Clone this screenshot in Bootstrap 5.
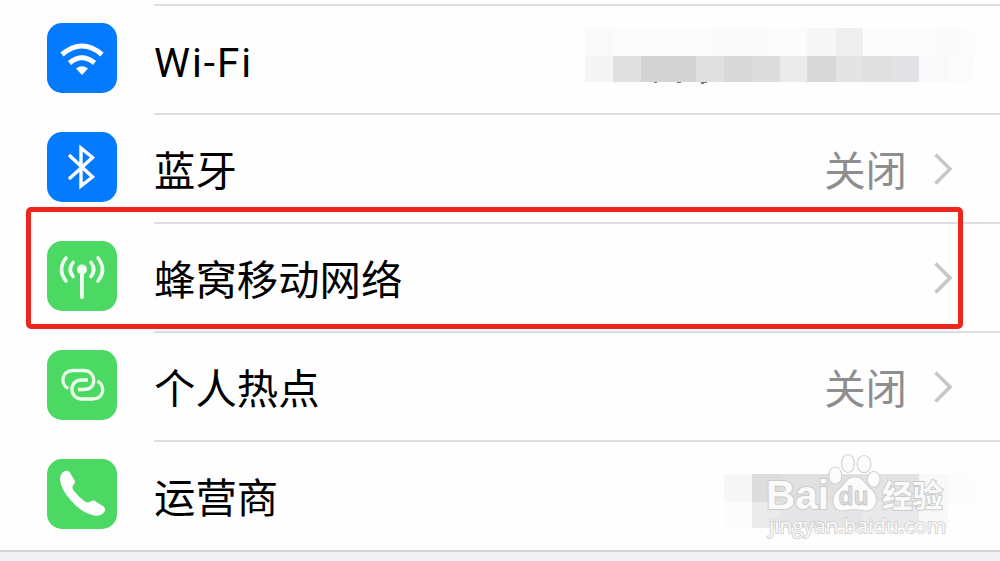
<!DOCTYPE html>
<html lang="zh-CN">
<head>
  <meta charset="UTF-8">
  <title>设置</title>
  <meta name="viewport" content="width=device-width, initial-scale=1">

  <link href="https://cdn.jsdelivr.net/npm/bootstrap@5.3.3/dist/css/bootstrap.min.css" rel="stylesheet">

  <style>
    body {
      background-color: #efeff4;
      font-family: "Noto Sans CJK SC", sans-serif;
      color: #000;
      overflow: hidden;
    }
    .settings {
      padding: 4px 0 0 47px;
      background: #fefefe;
      border-bottom: 2px solid #d2d2d8;
    }
    .setting-row {
      height: 109px;
      gap: 37px;
    }
    .setting-row:last-child {
      height: 110px;
    }
    .setting-row svg {
      flex: none;
    }
    .app-icon {
      width: 70px;
      height: 70px;
      margin-top: 18.5px;
      border-radius: 15px;
    }
    .icon-blue { background: #047afe; }
    .icon-green { background: #4bd964; }
    .setting-body {
      height: 109px;
      border-top: 2px solid #dededf;
      padding-right: 47px;
    }
    .setting-name, .setting-value {
      font-size: 41.4px;
      line-height: 60px;
      margin-top: -2px;
    }
    .setting-value {
      color: #8e8e8e;
      margin-right: 26px;
    }
    .latin {
      font-family: Roboto, sans-serif;
      font-size: 40.5px;
      letter-spacing: 2px;
      margin-top: 6px;
    }
    .highlight {
      left: 26px;
      top: 207px;
      width: 937px;
      height: 122px;
      border: 5.5px solid #ec261d;
      border-radius: 5px;
    }
    .wifi-mosaic { left: 585px; top: 28px; }
    .carrier-mosaic { left: 724px; top: 454px; }
  </style>
</head>

<body>

  <main class="settings">
    <div class="setting-row d-flex">
      <div class="app-icon icon-blue">
        <svg width="70" height="70" viewBox="0 0 70 70" fill="none" stroke="#fff" stroke-width="5">
          <path d="M15 31.500 Q35 14.500 55 31.500M22.500 40 Q35 29.500 47.500 40"/>
          <path d="M29 45.500 Q35 41 41 45.500 L35 52Z" fill="#fff" stroke="none"/>
        </svg>
      </div>
      <div class="setting-body flex-grow-1 d-flex align-items-center">
        <span class="setting-name latin">Wi-Fi</span>
      </div>
    </div>

    <div class="setting-row d-flex">
      <div class="app-icon icon-blue">
        <svg width="70" height="70" viewBox="0 0 70 70" fill="none" stroke="#fff" stroke-width="3.4">
          <path d="M22 23 L45.500 45 L34 54 V16 L45.500 25.500 L22 47"/>
        </svg>
      </div>
      <div class="setting-body flex-grow-1 d-flex align-items-center">
        <span class="setting-name">蓝牙</span>
        <span class="setting-value ms-auto">关闭</span>
        <svg width="20" height="34" viewBox="0 0 20 34" fill="none" stroke="#c7c7cb" stroke-width="3.6"><path d="M2.500 2.500 L17 17 L2.500 31.500"/></svg>
      </div>
    </div>

    <div class="setting-row d-flex">
      <div class="app-icon icon-green">
        <svg width="70" height="70" viewBox="0 0 70 70" fill="none" stroke="#f2fff3" stroke-width="3.6" stroke-linecap="round">
          <path d="M35 30 V56" stroke-width="4"/>
          <circle cx="35" cy="28.500" r="5" fill="#f2fff3" stroke="none"/>
          <path d="M26 21.500 Q20.500 28.500 26 35.500M44 21.500 Q49.500 28.500 44 35.500M19 17 Q10 28.500 19 40M51 17 Q60 28.500 51 40"/>
        </svg>
      </div>
      <div class="setting-body flex-grow-1 d-flex align-items-center">
        <span class="setting-name">蜂窝移动网络</span>
        <svg class="ms-auto" width="20" height="34" viewBox="0 0 20 34" fill="none" stroke="#c7c7cb" stroke-width="3.6"><path d="M2.500 2.500 L17 17 L2.500 31.500"/></svg>
      </div>
    </div>

    <div class="setting-row d-flex">
      <div class="app-icon icon-green">
        <svg width="70" height="70" viewBox="0 0 70 70" fill="none" stroke="#e9ffe9" stroke-width="3.3">
          <path d="M21.500 38.500 C13 35 14 20.500 26 20.500 H37 C49 20.500 51 39.500 37 39.500 H31"/>
          <path d="M41 30 H35 C21 30 22 49 35 49 H45 C57 49 59 36 50.500 31"/>
        </svg>
      </div>
      <div class="setting-body flex-grow-1 d-flex align-items-center">
        <span class="setting-name">个人热点</span>
        <span class="setting-value ms-auto">关闭</span>
        <svg width="20" height="34" viewBox="0 0 20 34" fill="none" stroke="#c7c7cb" stroke-width="3.6"><path d="M2.500 2.500 L17 17 L2.500 31.500"/></svg>
      </div>
    </div>

    <div class="setting-row d-flex">
      <div class="app-icon icon-green">
        <svg width="70" height="70" viewBox="0 0 70 70" fill="#fff">
          <path d="M16 13 Q20 10.500 22.500 13 L28 22 Q28.500 24 26 26.500 Q24.500 29 27 32 Q32 38.500 38 42.500 Q41 44.500 43.500 42.500 Q46 41 48 42 L56.500 47.500 Q59 49.500 57.500 52.500 Q54 58 47 56.500 Q34 53.500 24 41.500 Q14 30.500 13 20.500 Q13 15.500 16 13Z"/>
        </svg>
      </div>
      <div class="setting-body flex-grow-1 d-flex align-items-center">
        <span class="setting-name">运营商</span>
      </div>
    </div>
  </main>

  <!-- Frame around the mobile data row -->
  <div class="highlight position-absolute"></div>

  <!-- Hidden network name -->
  <svg class="wifi-mosaic position-absolute" width="390" height="60" viewBox="0 0 390 60" shape-rendering="crispEdges">
    <path fill="#fafafa" d="M0 0h28v28H0zM126 0h56v28h-56zM349 0h28v28h-28z"/>
    <path fill="#fcfcfc" d="M28 0h98v28H28zM182 0h40v28h-40zM278 0h71v28h-71zM377 0h12v40h-12z"/>
    <path fill="#f7f7f7" d="M222 0h29v28h-29z"/>
    <path fill="#efefef" d="M251 0h27v28h-27z"/>
    <path fill="#f5f5f5" d="M0 28h28v26H0z"/>
    <path fill="#e0e0e0" d="M28 28h28v26H28zM111 28h28v26h-28zM278 28h28v26h-28z"/>
    <path fill="#d3d3d3" d="M56 28h55v26H56z"/>
    <path fill="#d9d9d9" d="M139 28h28v26h-28zM222 28h29v26h-29z"/>
    <path fill="#dcdcdc" d="M167 28h28v26h-28z"/>
    <path fill="#ebebeb" d="M195 28h27v26h-27z"/>
    <path fill="#e4e4e4" d="M251 28h27v26h-27z"/>
    <path fill="#e2e2e6" d="M306 28h28v26h-28z"/>
    <path fill="#f9f9f9" d="M334 28h28v26h-28z"/>
    <path fill="#fbfbfb" d="M362 28h26v20l-7 6h-19z"/>
    <path fill="#777" d="M69 54h3v1h-3zM92 54h4v1h-4zM116 54h6v1h-3v1h-3z"/>
  </svg>

  <!-- Hidden carrier name with the site mark on top -->
  <svg class="carrier-mosaic position-absolute" width="250" height="90" viewBox="0 0 250 90">
    <g shape-rendering="crispEdges">
      <path fill="#f7f7f7" d="M0 20h28v28H0z"/>
      <path fill="#dcdcdc" d="M28 20h28v28H28z"/>
      <path fill="#e0e0e0" d="M56 20h83v28H56z"/>
      <path fill="#e3e3e3" d="M139 20h56v28h-56z"/>
      <path fill="#f9f9f9" d="M195 20h29v28h-29z"/>
      <path fill="#fcfcfc" d="M0 48h28v26H0zM224 20h26v31h-26z"/>
      <path fill="#ebebeb" d="M28 48h28v26H28z"/>
      <path fill="#e5e5e7" d="M56 48h83v26H56z"/>
      <path fill="#e9e9eb" d="M139 48h56v26h-56z"/>
      <path fill="#f8f8f8" d="M195 48h29v26h-29z"/>
    </g>
    <g fill="#fcfcfc" stroke="#d3d3d3" stroke-width="1.200">
      <ellipse cx="111.300" cy="21.500" rx="6.500" ry="8.500"/>
      <ellipse cx="124" cy="9.500" rx="6.500" ry="9"/>
      <ellipse cx="140" cy="10" rx="7" ry="8.500"/>
      <ellipse cx="149.700" cy="25.300" rx="6.500" ry="8"/>
      <path d="M131 22.700 C139 22.700 141 30 146 34 C156 41 154 57 142 57 C136 57 137 55.500 131 55.500 C125 55.500 125 57 118 57 C107 56 106 42 115 35 C121 30 123 22.700 131 22.700Z"/>
    </g>
    <g fill="#fafafa" stroke="#cbcbcb" stroke-width="2" paint-order="stroke" font-weight="700">
      <text x="42" y="55" font-family="Liberation Sans" font-size="40" textLength="63" lengthAdjust="spacingAndGlyphs">Bai</text>
      <text x="158" y="53" font-family="Noto Sans CJK SC" font-size="31" textLength="61" lengthAdjust="spacingAndGlyphs">经验</text>
      <text x="45" y="78.500" font-family="Open Sans" font-size="20.500" font-weight="400" stroke-width="1.600" textLength="177" lengthAdjust="spacingAndGlyphs">jingyan.baidu.com</text>
    </g>
    <text x="114.500" y="50.500" font-family="Liberation Sans" font-size="25" fill="#ddd" stroke="#c9c9c9" stroke-width=".8" font-weight="700" textLength="30" lengthAdjust="spacingAndGlyphs">du</text>
  </svg>

  <script src="https://cdn.jsdelivr.net/npm/bootstrap@5.3.3/dist/js/bootstrap.bundle.min.js"></script>

</body>
</html>
